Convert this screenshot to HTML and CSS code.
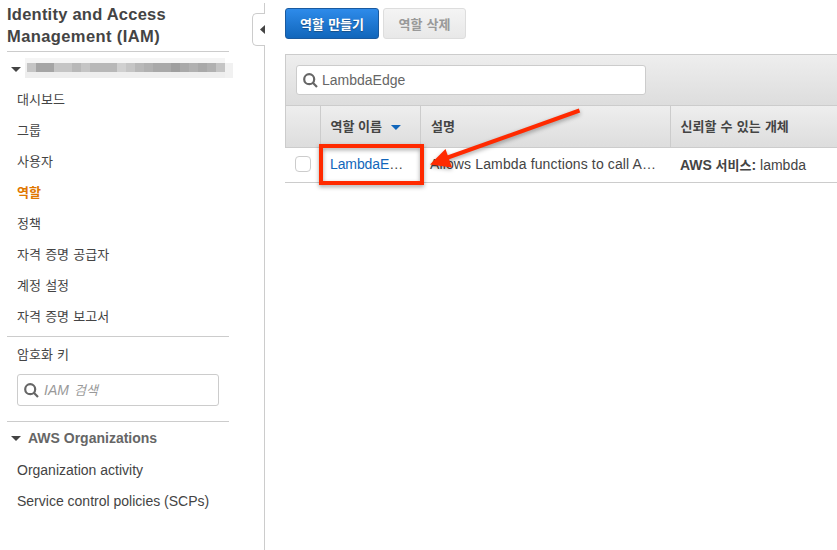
FILE: index.html
```html
<!DOCTYPE html>
<html lang="ko">
<head>
<meta charset="utf-8">
<title>IAM</title>
<link rel="stylesheet" href="styles.css">
</head>
<body>
<div class="app">
  <aside class="sidebar">
    <h1 class="title"><span class="t1">Identity and Access</span><br><span class="t2">Management (IAM)</span></h1>
    <div class="account">
      <i class="caret"></i>
      <svg class="mask" width="208" height="20" shape-rendering="crispEdges">
        <path fill="#f5f5f5" d="M0 0h200v5H0z"/><path fill="#eeeeee" d="M0 14h200v6H0z"/><path fill="#f1f1f1" d="M200 5h8v15h-8zM0 5h2v9H0z"/>
        <path fill="#c5c5c5" d="M2 5h198v9H2z"/>
        <path fill="#a5a5a5" d="M11 5h18v9H11z"/>
        <path fill="#b8b8b8" d="M47 5h9v9h-9zM65 5h27v9H65zM110 5h9v9h-9z"/>
        <path fill="#d0d0d0" d="M92 5h9v9h-9z"/>
        <path fill="#b1b1b1" d="M119 5h9v9h-9zM164 5h9v9h-9zM182 5h9v9h-9z"/>
        <path fill="#a9a9a9" d="M128 5h18v9h-18zM155 5h9v9h-9zM173 5h9v9h-9z"/>
        <path fill="#9f9f9f" d="M146 5h9v9h-9z"/>
      </svg>
    </div>
    <nav class="nav">
      <a>대시보드</a><a>그룹</a><a>사용자</a><a class="active">역할</a><a>정책</a><a class="wide">자격 증명 공급자</a><a class="wide">계정 설정</a><a class="wide">자격 증명 보고서</a>
    </nav>
    <nav class="nav keys"><a class="wide">암호화 키</a></nav>
    <div class="search side-search">
      <svg class="glass" width="15" height="15" viewBox="0 0 15 15"><circle cx="6.2" cy="6.2" r="5" /><path d="M9.8 9.8L14 14"/></svg>
      <span class="placeholder"><span class="lat">IAM</span> 검색</span>
    </div>
    <div class="section"><i class="caret"></i><span class="orgs">AWS Organizations</span></div>
    <nav class="nav latin"><a>Organization activity</a><a>Service control policies (SCPs)</a></nav>
  </aside>
  <div class="divider"><div class="handle"><i></i></div></div>
  <main class="main">
    <div class="buttons"><button class="primary">역할 만들기</button><button class="disabled">역할 삭제</button></div>
    <div class="panel">
      <div class="filter">
        <div class="search">
          <svg class="glass" width="15" height="15" viewBox="0 0 15 15"><circle cx="6.2" cy="6.2" r="5" /><path d="M9.8 9.8L14 14"/></svg>
          <span class="query">LambdaEdge</span>
        </div>
      </div>
      <div class="row head"><div></div><div>역할 이름<i class="sort"></i></div><div class="desc-head">설명</div><div class="wide">신뢰할 수 있는 개체</div></div>
      <div class="row data"><div><i class="check"></i></div><div><span class="name"><a>LambdaE</a>…</span></div><div><span class="desc">Allows Lambda functions to call A…</span></div><div class="entity"><b><span class="lat">AWS</span> 서비스<span class="lat">:</span></b><span class="svc">lambda</span></div></div>
    </div>
  </main>
  <svg class="callout" width="300" height="100" viewBox="310 95 300 100">
    <path class="box" d="M321 146h101v37H321z"/>
    <path class="shaft" d="M579.5 110.5L445 158.5"/>
    <path class="tip" d="M430 164.500L445.500 149L452 167.500z"/>
  </svg>
</div>
</body>
</html>
```
FILE: styles.css
```css
* { box-sizing: border-box; }
body { margin: 0; background: #fff; color: #444; font: 13px/20px "Liberation Sans", "Noto Sans CJK KR", sans-serif; }
.app { position: relative; display: flex; width: 837px; height: 550px; overflow: hidden; }
.sidebar { width: 229px; padding-left: 7px; flex: none; }
.title { margin: 0; height: 52px; padding-top: 3px; border-bottom: 1px solid #ccc; font-size: 16.5px; line-height: 22px; white-space: nowrap; }
.t1 { letter-spacing: .24px; }
.t2 { letter-spacing: .4px; }
.account { display: flex; height: 32px; padding: 6px 0 0 4px; margin-right: -10px; }
.caret { flex: none; width: 10px; height: 5px; background: #444; clip-path: polygon(0 0, 100% 0, 50% 100%); }
.account .caret { margin-top: 9px; }
.mask { flex: none; margin-left: 4px; }
.nav a { display: block; height: 31px; padding-left: 10px; line-height: 31px; white-space: nowrap; }
.nav .active { color: #e07700; font-weight: bold; }
.wide { word-spacing: .6px; }
.keys { margin-top: 4px; padding-top: 2px; border-top: 1px solid #ccc; height: 38px; }
.search { display: flex; align-items: center; border: 1px solid #ccc; border-radius: 3px; background: #fff; padding-left: 6px; white-space: nowrap; }
.side-search { width: 202px; height: 32px; margin: 0 0 15px 10px; }
.glass { flex: none; fill: none; stroke: #666; stroke-width: 2.2; }
.placeholder { margin-left: 5px; color: #999; font-style: italic; word-spacing: 1.5px; }
.lat { font-size: 14px; }
.section { display: flex; align-items: center; border-top: 1px solid #ccc; height: 34px; padding-left: 4px; color: #666; font-weight: bold; font-size: 14px; }
.orgs { margin: 0 0 2px 7px; white-space: nowrap; }
.latin { font-size: 14px; }
.divider { flex: none; width: 36px; margin-top: 3px; border-right: 1px solid #ccc; }
.handle { display: flex; align-items: center; justify-content: flex-end; width: 13px; height: 33px; margin: 10px -1px 0 23px; border: 1px solid #ccc; border-right: 0; border-radius: 5px 0 0 5px; background: #fff; }
.handle i { width: 5px; height: 9px; background: #444; clip-path: polygon(0 50%, 100% 0, 100% 100%); }
.main { flex: none; width: 572px; padding: 8px 0 0 20px; }
.buttons { display: flex; gap: 4px; height: 46px; }
button { height: 31px; padding: 0; border-radius: 3px; font: bold 13px/20px "Noto Sans CJK KR", sans-serif; word-spacing: .6px; }
.primary { width: 94px; border: 1px solid #1a5a9f; background: linear-gradient(#2e8bea, #1166bb); color: #fff; text-shadow: 0 1px 1px #174f87; }
.disabled { width: 83px; border: 1px solid #ddd; background: linear-gradient(#f4f4f4, #e8e8e8); color: #999; }
.panel { border-left: 1px solid #ccc; border-top: 1px solid #ccc; height: 129px; }
.filter { height: 50px; padding: 10px; background: linear-gradient(#eee, #ddd); }
.filter .search { width: 350px; height: 30px; }
.query { margin-left: 4px; font-size: 14px; color: #666; }
.row { display: grid; grid-template-columns: 34px 100px 250px 1fr; }
.head { height: 43px; border: solid #ccc; border-width: 1px 0; background: linear-gradient(#eee, #ddd); font-weight: bold; }
.head > div { padding-left: 9.5px; line-height: 41px; white-space: nowrap; }
.head > div + div { border-left: 1px solid #ccc; }
.head > .desc-head { padding-left: 10px; }
.sort { display: inline-block; width: 10px; height: 5px; margin: 0 0 1px 9px; background: #1166bb; clip-path: polygon(0 0, 100% 0, 50% 100%); }
.data { height: 35px; margin-left: -1px; padding-left: 1px; border-bottom: 1px solid #ccc; background: #fff; }
.data > div { padding-left: 10px; line-height: 33px; white-space: nowrap; font-size: 14px; }
.data > div:first-child { padding-left: 9px; }
.data > .entity { padding-top: 1px; }
.data b { font-size: 13px; }
.data a { color: #1166bb; }
.name { letter-spacing: -.1px; }
.desc { letter-spacing: .13px; }
.check { display: block; width: 16px; height: 16px; margin-top: 8px; border: 1px solid #ccc; border-radius: 4px; }
.svc { margin-left: 4px; }
.callout { position: absolute; left: 310px; top: 95px; filter: drop-shadow(0 2px 2px rgba(0,0,0,.35)); }
.box { fill: none; stroke: #ff2a00; stroke-width: 4; }
.shaft { stroke: #ff2a00; stroke-width: 4; }
.tip { fill: #ff2a00; }
```
